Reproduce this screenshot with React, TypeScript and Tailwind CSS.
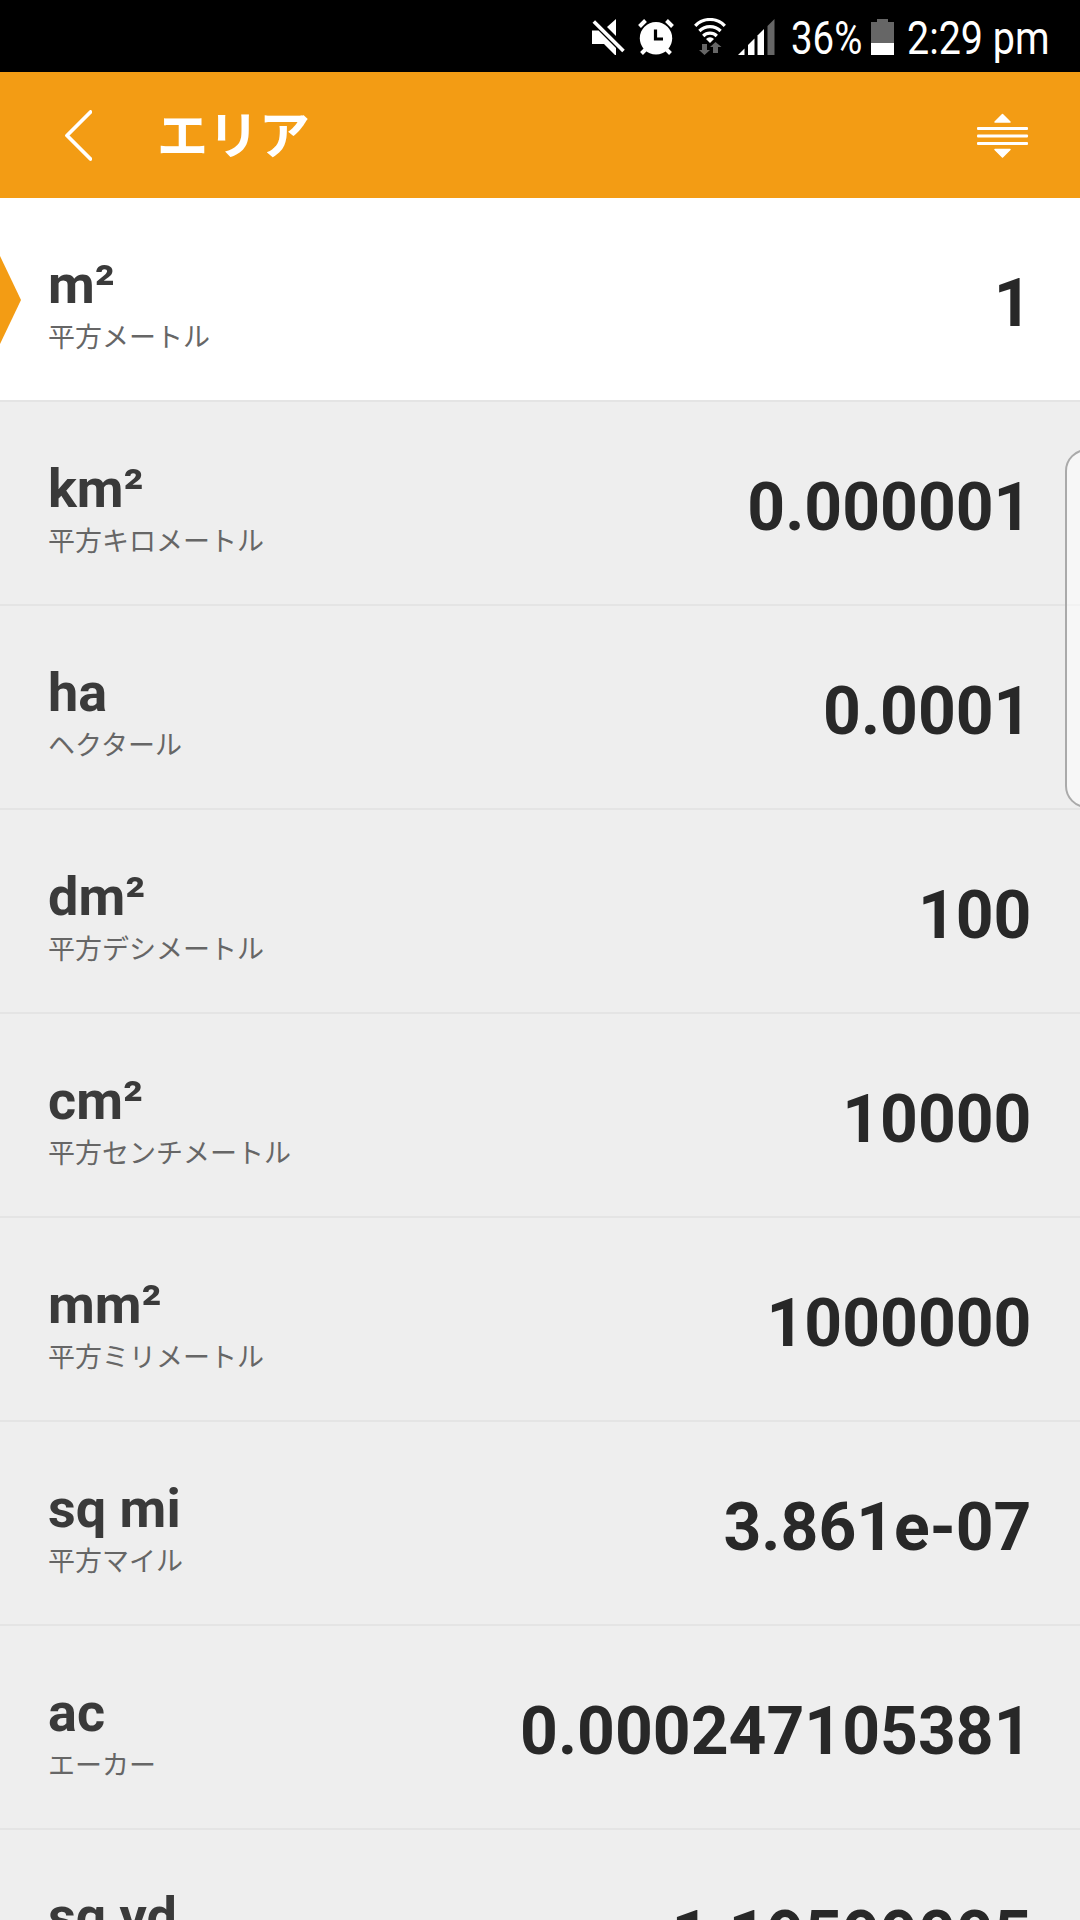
interface Unit {
  readonly symbol: string;
  readonly name: string;
  readonly value: string;
}

const UNITS: readonly Unit[] = [
  { symbol: 'm²', name: '平方メートル', value: '1' },
  { symbol: 'km²', name: '平方キロメートル', value: '0.000001' },
  { symbol: 'ha', name: 'ヘクタール', value: '0.0001' },
  { symbol: 'dm²', name: '平方デシメートル', value: '100' },
  { symbol: 'cm²', name: '平方センチメートル', value: '10000' },
  { symbol: 'mm²', name: '平方ミリメートル', value: '1000000' },
  { symbol: 'sq mi', name: '平方マイル', value: '3.861e-07' },
  { symbol: 'ac', name: 'エーカー', value: '0.000247105381' },
  { symbol: 'sq yd', name: '平方ヤード', value: '1.19599005' },
];

function MuteIcon() {
  return (
    <svg className="h-9 w-[34px]" viewBox="0 0 34 36" fill="#fff">
      <path d="M0 11.5H6.5L24 29V36H23L12 25H0Z" />
      <path d="M24 0V17L15 8Z" />
      <path d="M1.8 2.5L31.5 32" stroke="#fff" strokeWidth="3.6" />
    </svg>
  );
}

function AlarmIcon() {
  return (
    <svg className="h-9 w-9" viewBox="0 0 36 36" fill="none">
      <circle cx="18" cy="19.2" r="16.2" fill="#fff" />
      <path d="M1.5 7.5L7.5 1.5M28.5 1.5L34.5 7.5" stroke="#fff" strokeWidth="4" />
      <path d="M8 30L3.5 34.5M28 30L32.5 34.5" stroke="#fff" strokeWidth="4" />
      <path d="M17.5 10.5V20H25" stroke="#000" strokeWidth="3.2" />
    </svg>
  );
}

function WifiIcon() {
  return (
    <svg className="h-[37px] w-8" viewBox="0 0 32 37" fill="none">
      <path d="M1.2 7.8A20.5 20.5 0 0 1 30.8 7.8" stroke="#fff" strokeWidth="3.2" />
      <path d="M5.4 13A15 15 0 0 1 26.6 13" stroke="#fff" strokeWidth="3.2" />
      <path d="M9.2 18A9.6 9.6 0 0 1 22.8 18" stroke="#fff" strokeWidth="3.2" />
      <path d="M12 21A5.7 5.7 0 0 1 20 21L16 25Z" fill="#fff" />
      <path d="M8 26H13V32H16L10.5 37L5 32H8Z" fill="#666" />
      <path d="M19 35V29H16L21.5 24L27.5 29H24V35Z" fill="#666" />
    </svg>
  );
}

function SignalIcon() {
  return (
    <svg className="h-9 w-[37px]" viewBox="0 0 37 36" fill="#fff">
      <path d="M0 36L6.5 29.5V36Z" />
      <path d="M10 26L16.5 19.5V36H10Z" />
      <path d="M19.5 16.5L26 10V36H19.5Z" />
      <path d="M29.5 7L36.5 0V36H29.5Z" fill="#666" />
    </svg>
  );
}

function BatteryIcon() {
  return (
    <svg className="h-9 w-[23px]" viewBox="0 0 23 36">
      <path d="M6 0H17V3H23V24H0V3H6Z" fill="#666" />
      <path d="M0 24H23V36H0Z" fill="#fff" />
    </svg>
  );
}

// Roboto is squeezed horizontally to get the condensed look of the system bar
function StatusBar() {
  return (
    <div className="flex h-[72px] items-start justify-end bg-black pr-[30px] text-[46px] leading-[72px] whitespace-nowrap text-white">
      <div className="mt-[19px] mr-3">
        <MuteIcon />
      </div>
      <div className="mt-[19px] mr-[20px]">
        <AlarmIcon />
      </div>
      <div className="mt-[18px] mr-[12px]">
        <WifiIcon />
      </div>
      <div className="mt-[19px] mr-[16px]">
        <SignalIcon />
      </div>
      <div className="mt-[2px] w-[80px] origin-left scale-x-[0.835]">36%</div>
      <div className="mt-[19px] mr-[13px]">
        <BatteryIcon />
      </div>
      <div className="mt-[2px] w-[143px] origin-left scale-x-[0.857]">2:29 pm</div>
    </div>
  );
}

function Header() {
  return (
    <header className="flex h-[126px] items-center bg-[#f39c14] text-white">
      <svg className="mt-[2px] ml-[64px] h-[52px] w-7" viewBox="0 0 28 52" fill="none">
        <path
          d="M26.5 2L3 25.5L26.5 49"
          stroke="currentColor"
          strokeWidth="3.8"
          strokeLinecap="round"
          strokeLinejoin="round"
        />
      </svg>
      <h1 className="mt-[4px] ml-[65px] text-[51px] leading-[72px] font-bold">エリア</h1>
      <svg className="mt-[2px] mr-[51px] ml-auto h-[46px] w-[52px]" viewBox="0 0 52 46" fill="currentColor">
        <path
          d="M25.5 1.5L33 9H18ZM25.5 44L33 36.5H18Z"
          stroke="currentColor"
          strokeWidth="1.5"
          strokeLinejoin="round"
        />
        <rect x="0" y="14" width="51" height="3" rx="1" />
        <rect x="0" y="21.5" width="51" height="3" rx="1" />
        <rect x="0" y="29" width="51" height="3" rx="1" />
      </svg>
    </header>
  );
}

function UnitRow({ unit, selected }: { readonly unit: Unit; readonly selected: boolean }) {
  return (
    <li
      className={`relative flex h-[204px] shrink-0 justify-between border-b-2 border-[#e4e4e4] pr-[48.5px] pl-[48px] ${
        selected ? 'bg-white' : 'bg-[#eee]'
      }`}
    >
      {selected && (
        <svg className="absolute top-[58px] left-0 h-[88px] w-[21px]" viewBox="0 0 21 88" fill="#f39c14">
          <path d="M0 0L21 44L0 88Z" />
        </svg>
      )}
      <div className="pt-[54.5px]">
        <div className="text-[54px] leading-[64px] font-bold text-[#3a3a3a]">{unit.symbol}</div>
        <div className="mt-[1.5px] text-[27px] leading-[40px] text-[#666]">{unit.name}</div>
      </div>
      <div className="pt-[66px] text-[66px] leading-[80px] font-bold text-[#282828]">{unit.value}</div>
    </li>
  );
}

export default function App() {
  return (
    <div className="relative flex h-[1920px] w-[1080px] flex-col overflow-hidden bg-[#eee] font-['Roboto','Noto_Sans_CJK_JP',sans-serif]">
      <StatusBar />
      <Header />
      <ul className="flex min-h-0 flex-1 flex-col overflow-hidden">
        {UNITS.map((unit, i) => (
          <UnitRow key={unit.symbol} unit={unit} selected={i === 0} />
        ))}
      </ul>
      {/* edge panel handle, mostly off screen */}
      <div className="absolute top-[449px] left-[1065px] h-[359px] w-[60px] rounded-[22px] border-2 border-[#aaa] bg-white/50" />
    </div>
  );
}
